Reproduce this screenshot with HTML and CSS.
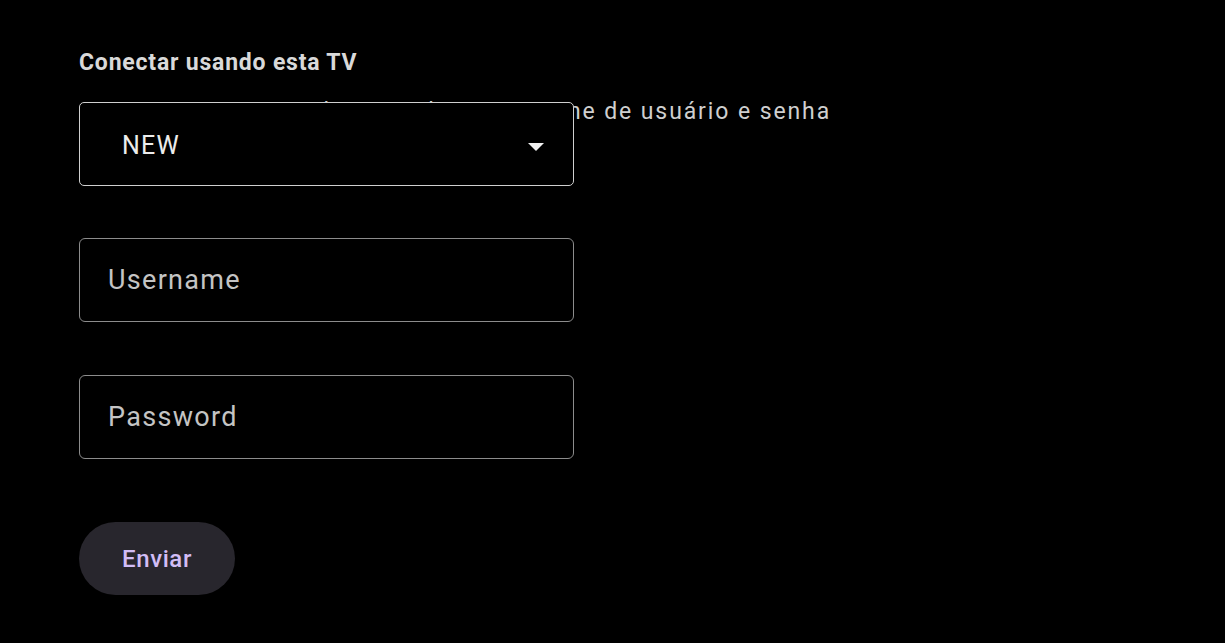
FILE: index.html
```html
<!DOCTYPE html>
<html lang="pt">
  <head>
    <meta charset="UTF-8" />
    <meta name="viewport" content="width=device-width, initial-scale=1.0" />
    <title>Conectar usando esta TV</title>
    <link rel="stylesheet" href="styles.css">
  </head>
  <body>
    <section class="login">
      <h1 class="title">Conectar usando esta TV</h1>
      <p class="subtitle">Conecte-se ao servidor usando o seu nome de usuário e senha</p>

      <form class="form">
        <div class="select">
          <span class="select-value">NEW</span>
          <svg class="select-arrow" width="16" height="8" viewBox="0 0 16 8">
            <path d="M0 0 L16 0 L8 8 Z" fill="#f2f2f2" />
          </svg>
        </div>

        <div class="field">
          <input class="field-input" type="text" placeholder="Username" />
        </div>

        <div class="field">
          <input class="field-input" type="password" placeholder="Password" />
        </div>

        <button class="submit" type="button">Enviar</button>
      </form>
    </section>
  </body>
</html>
```

FILE: styles.css
```css
* {
  margin: 0;
  padding: 0;
  box-sizing: border-box;
}

body {
  background-color: #000;
  font-family: Roboto, "Liberation Sans", sans-serif;
  color: #ddd;
}

.login {
  padding: 50px 0 0 79px;
}

.title {
  font-size: 23px;
  font-weight: 700;
  line-height: 26px;
  letter-spacing: 0.8px;
  color: #d9d9d9;
}

.subtitle {
  margin-top: 23px;
  font-size: 23px;
  line-height: 26px;
  letter-spacing: 1.9px;
  color: #cfcfcf;
  white-space: nowrap;
}

.form {
  display: flex;
  flex-direction: column;
  align-items: flex-start;
}

/* a caixa de seleção fica por cima do texto de baixo */
.select {
  position: relative;
  z-index: 1;
  margin-top: -23px;
  width: 495px;
  height: 84px;
  display: flex;
  align-items: center;
  justify-content: space-between;
  padding: 0 29px 0 42px;
  background-color: #000;
  border: 1.5px solid #cfcfcf;
  border-radius: 5px;
}

.select-value {
  font-size: 25px;
  letter-spacing: 1.2px;
  color: #ececec;
  margin-top: 3px;
}

.select-arrow {
  display: block;
  margin-top: 5px;
}

.field {
  margin-top: 52px;
  width: 495px;
}

.field + .field {
  margin-top: 53px;
}

.field-input {
  width: 100%;
  height: 84px;
  padding: 0 28px;
  background-color: #000;
  border: 1.5px solid #8c8c8c;
  border-radius: 6px;
  font-family: inherit;
  font-size: 27px;
  letter-spacing: 1.3px;
  color: #ddd;
  outline: none;
}

.field-input::placeholder {
  color: #c4c4c4;
}

.submit {
  margin-top: 63px;
  width: 156px;
  height: 73px;
  border: none;
  border-radius: 37px;
  background-color: #28262d;
  font-family: inherit;
  font-size: 24px;
  font-weight: 500;
  letter-spacing: 0.6px;
  color: #d2bdf6;
}
```
